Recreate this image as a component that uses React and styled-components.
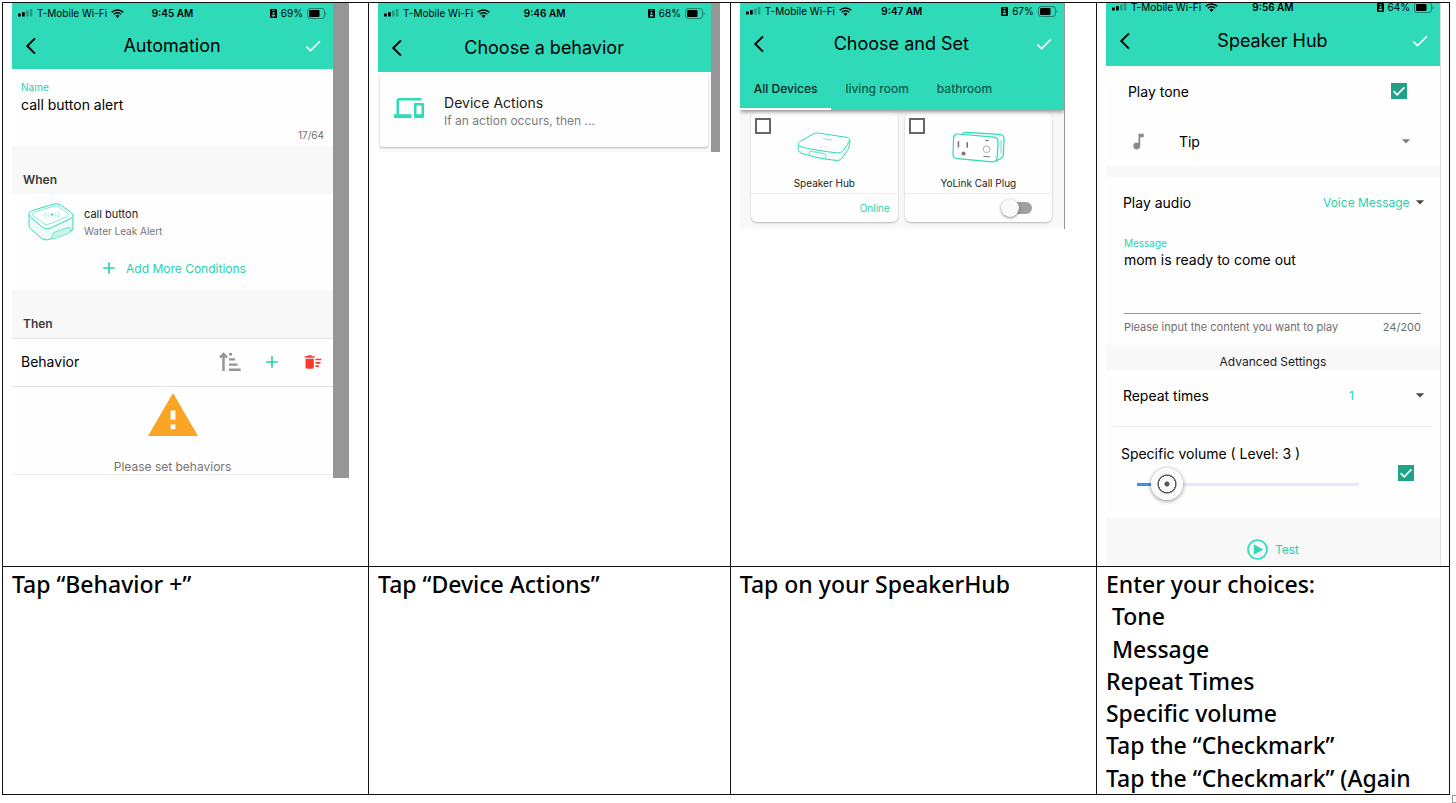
import React, { useState } from 'react'
import styled, { createGlobalStyle } from 'styled-components'
import {
  MdAdd,
  MdArrowDropDown,
  MdCheck,
  MdDeleteSweep,
  MdDevices,
  MdMusicNote,
} from 'react-icons/md'

const teal = '#2edab8'
const tealText = '#2bd0ae'

export default function App() {
  return (
    <Page>
      <GlobalStyle />
      <Steps>
        <colgroup>
          <col width="25.3%" />
          <col width="25%" />
          <col width="25.3%" />
          <col width="24.4%" />
        </colgroup>
        <tbody>
          <tr>
            <Cell>
              <AutomationShot />
            </Cell>
            <Cell>
              <BehaviorShot />
            </Cell>
            <Cell>
              <DevicesShot />
            </Cell>
            <Cell>
              <SpeakerShot />
            </Cell>
          </tr>
          <tr>
            <Cell>
              <Caption>Tap “Behavior +”</Caption>
            </Cell>
            <Cell>
              <Caption>Tap “Device Actions”</Caption>
            </Cell>
            <Cell>
              <Caption>Tap on your SpeakerHub</Caption>
            </Cell>
            <Cell>
              <Caption>{'Enter your choices:\n Tone'}</Caption>
              <Caption>
                {' Message\nRepeat Times\nSpecific volume\nTap the “Checkmark”'}
              </Caption>
              <Caption>Tap the “Checkmark” (Again</Caption>
            </Cell>
          </tr>
        </tbody>
      </Steps>
      <ResizeHandle />
    </Page>
  )
}

const AutomationShot = () => (
  <Shot $max={337}>
    <Screen>
      <Header title="Automation" time="9:45 AM" battery="69%" status={20} nav={46} done />
      <NameField>
        <FieldLabel htmlFor="name">Name</FieldLabel>
        <TextInput id="name" defaultValue="call button alert" />
        <Counter>17/64</Counter>
      </NameField>
      <Section>When</Section>
      <Condition>
        <ButtonArt />
        <div>
          <ConditionName>call button</ConditionName>
          <ConditionNote>Water Leak Alert</ConditionNote>
        </div>
      </Condition>
      <AddMore type="button">
        <MdAdd size={20} />
        Add More Conditions
      </AddMore>
      <Section>Then</Section>
      <BehaviorBar>
        <span>Behavior</span>
        <BehaviorTools>
          <IconButton type="button" aria-label="Sort">
            <SortIcon />
          </IconButton>
          <IconButton type="button" aria-label="Add behavior">
            <MdAdd size={20} color={tealText} />
          </IconButton>
          <IconButton type="button" aria-label="Delete all">
            <MdDeleteSweep size={20} color="#f73c2f" />
          </IconButton>
        </BehaviorTools>
      </BehaviorBar>
      <Empty>
        <WarningIcon />
        Please set behaviors
      </Empty>
    </Screen>
    <Strip $width={16} />
  </Shot>
)

const BehaviorShot = () => (
  <Shot $max={342}>
    <Screen>
      <Header title="Choose a behavior" time="9:46 AM" battery="68%" status={20} nav={49} />
      <CardArea>
        <ActionCard type="button">
          <MdDevices size={30} color={teal} />
          <span>
            <ActionName>Device Actions</ActionName>
            <ActionNote>If an action occurs, then ...</ActionNote>
          </span>
        </ActionCard>
      </CardArea>
    </Screen>
    <Strip $width={9} />
  </Shot>
)

const DevicesShot = () => (
  <Shot $max={325}>
    <Screen>
      <Header title="Choose and Set" time="9:47 AM" battery="67%" status={16} nav={50} done>
        <Tabs role="tablist">
          <Tab type="button" role="tab" aria-selected="true" $active>
            All Devices
          </Tab>
          <Tab type="button" role="tab" aria-selected="false">
            living room
          </Tab>
          <Tab type="button" role="tab" aria-selected="false">
            bathroom
          </Tab>
        </Tabs>
      </Header>
      <DeviceGrid>
        <Device>
          <DeviceTop>
            <EmptyBox type="checkbox" aria-label="Select Speaker Hub" />
            <HubArt />
          </DeviceTop>
          <DeviceName>Speaker Hub</DeviceName>
          <DeviceFoot>
            <Online>Online</Online>
          </DeviceFoot>
        </Device>
        <Device>
          <DeviceTop>
            <EmptyBox type="checkbox" aria-label="Select YoLink Call Plug" />
            <PlugArt />
          </DeviceTop>
          <DeviceName>YoLink Call Plug</DeviceName>
          <DeviceFoot $inset>
            <Switch type="checkbox" role="switch" aria-label="YoLink Call Plug power" />
          </DeviceFoot>
        </Device>
      </DeviceGrid>
    </Screen>
    <Strip $width={1} />
  </Shot>
)

const SpeakerShot = () => {
  const [level, setLevel] = useState(3)

  return (
    <Shot $max={336}>
      <Screen>
        <Header title="Speaker Hub" time="9:56 AM" battery="64%" status={8} nav={50} cropped done />
        <ToneRow>
          <label htmlFor="tone">Play tone</label>
          <CheckBox id="tone" />
        </ToneRow>
        <TipRow>
          <MdMusicNote size={21} color="#8a8a8a" />
          <Select aria-label="Tone">
            <option>Tip</option>
          </Select>
          <MdArrowDropDown size={20} color="#808080" />
        </TipRow>
        <Band />
        <SettingRow>
          <label htmlFor="audio">Play audio</label>
          <Picker>
            <Select id="audio" $accent>
              <option>Voice Message</option>
            </Select>
            <MdArrowDropDown size={20} />
          </Picker>
        </SettingRow>
        <MessageField>
          <FieldLabel htmlFor="message">Message</FieldLabel>
          <MessageInput id="message" defaultValue="mom is ready to come out" />
          <Hint>
            <span>Please input the content you want to play</span>
            <span>24/200</span>
          </Hint>
        </MessageField>
        <Advanced>Advanced Settings</Advanced>
        <SettingRow>
          <label htmlFor="repeat">Repeat times</label>
          <Picker $spread>
            <Select id="repeat" $accent>
              <option>1</option>
            </Select>
            <MdArrowDropDown size={20} />
          </Picker>
        </SettingRow>
        <Divider />
        <Volume>
          <VolumeMain>
            <label htmlFor="volume">Specific volume ( Level: {level} )</label>
            <Range
              id="volume"
              type="range"
              min="1"
              max="16"
              value={level}
              onChange={(e) => setLevel(Number(e.target.value))}
              style={{ '--fill': (level - 1) / 15 }}
            />
          </VolumeMain>
          <CheckBox id="use-volume" label="Use specific volume" />
        </Volume>
        <TestBar>
          <TestButton type="button">
            <PlayIcon />
            Test
          </TestButton>
        </TestBar>
      </Screen>
      <Strip $width={1} $light />
    </Shot>
  )
}

const Header = ({ title, time, battery, status, nav, cropped, done, children }) => (
  <Top $raised={Boolean(children)}>
    <Status $height={status} $cropped={cropped}>
      <StatusSide>
        <SignalIcon />
        T-Mobile Wi-Fi
        <WifiIcon />
      </StatusSide>
      <Time>{time}</Time>
      <StatusSide $end>
        <BadgeIcon />
        {battery}
        <BatteryIcon />
      </StatusSide>
    </Status>
    <Nav $height={nav}>
      <IconButton type="button" aria-label="Back">
        <BackIcon />
      </IconButton>
      <Title>{title}</Title>
      {done && (
        <IconButton type="button" aria-label="Done">
          <MdCheck size={20} color="#fff" />
        </IconButton>
      )}
    </Nav>
    {children}
  </Top>
)

const CheckBox = ({ id, label }) => (
  <Tick>
    <input id={id} type="checkbox" defaultChecked aria-label={label} />
    <svg width="16" height="16" viewBox="0 0 16 16">
      <path d="M2.6 8.2l3.6 3.6 7.2-7.4" fill="none" stroke="#fff" strokeWidth="1.7" />
    </svg>
  </Tick>
)

/* icons */

const SignalIcon = () => (
  <svg width="15" height="8" viewBox="0 0 15 8">
    <rect x="0" y="4.5" width="2.8" height="3" rx="0.6" />
    <rect x="4" y="3" width="2.8" height="4.5" rx="0.6" />
    <rect x="8" y="1.5" width="2.6" height="6" rx="0.6" opacity="0.28" />
    <rect x="11.8" y="0" width="2.6" height="7.5" rx="0.6" opacity="0.28" />
  </svg>
)

const WifiIcon = () => (
  <svg width="13" height="9" viewBox="0 0 13 9">
    <g fill="none" stroke="#000" strokeWidth="1.5">
      <path d="M0.7 3.3a8.2 8.2 0 0 1 11.6 0" />
      <path d="M2.8 5.3a5.3 5.3 0 0 1 7.4 0" />
    </g>
    <path d="M4.5 6.8a2.9 2.9 0 0 1 4 0L6.5 8.9z" />
  </svg>
)

const BadgeIcon = () => (
  <svg width="7" height="9" viewBox="0 0 7 9">
    <rect width="7" height="9" rx="1" />
    <rect x="2.4" y="0.9" width="2.2" height="0.9" fill={teal} />
    <circle cx="3.5" cy="4" r="1.1" fill={teal} />
    <path d="M1.5 7.4c0-2.6 4-2.6 4 0z" fill={teal} />
  </svg>
)

const BatteryIcon = () => (
  <svg width="20" height="11" viewBox="0 0 20 11">
    <rect x="0.5" y="0.5" width="17" height="10" rx="2.6" fill="none" stroke="#000" strokeOpacity="0.4" />
    <rect x="2" y="2" width="10.5" height="7" rx="1.2" />
    <path d="M18.6 3.7c1.3.4 1.3 3.2 0 3.6z" opacity="0.4" />
  </svg>
)

const BackIcon = () => (
  <svg width="12" height="18" viewBox="0 0 12 18">
    <path d="M10 1.4L2.3 9l7.7 7.6" fill="none" stroke="#000" strokeWidth="2" />
  </svg>
)

const SortIcon = () => (
  <svg width="22" height="20" viewBox="0 0 22 20">
    <g fill="none" stroke="#949494" strokeWidth="2.4">
      <path d="M4.5 19V3" />
      <path d="M1 5.6L4.5 2 8 5.6" />
      <path d="M10 2.2h3M10 7.4h6M10 12.6h8.6M10 17.8h11.6" />
    </g>
  </svg>
)

const WarningIcon = () => (
  <svg width="50" height="43" viewBox="0 0 50 43">
    <path d="M25 0l25 43H0z" fill="#f9a425" />
    <path d="M22.6 17.4h4.8v9.4h-4.8zM22.6 31.4h4.8v4.8h-4.8z" fill="#fff" />
  </svg>
)

const PlayIcon = () => (
  <svg width="21" height="21" viewBox="0 0 21 21">
    <circle cx="10.5" cy="10.5" r="9.5" fill="none" stroke={teal} strokeWidth="1.7" />
    <path d="M6.8 5.2l9.4 5.3-9.4 5.3z" fill={teal} />
  </svg>
)

/* device drawings */

const ButtonArt = () => (
  <svg width="46" height="38" viewBox="0 0 46 38" fill="none" stroke={teal}>
    <path
      d="M1 11.5v10.2c0 2.2 1 3.4 2.6 4.8l9.6 8.4c2.4 2.2 5.4 2.4 8.4 1.4l20.2-7.4c2.3-.9 3.2-2.2 3.2-4.4V14"
      fill="#effcf8"
    />
    <path
      d="M4.6 7.4L25 1.3c3-.8 5.7-.6 8.2 1.2l9.4 6.6c3.4 2.5 3 5.4-.8 6.8L22.6 25c-3.4 1.2-6.4.8-8.8-1.2L2.8 14.2c-3-2.6-2.2-5.6 1.8-6.8z"
      fill="#fff"
    />
    <path
      d="M6.6 9L25.2 3.4c2.4-.6 4.4-.4 6.4 1l7 5.2c2.4 1.8 2 3.6-.8 4.6l-16 6.6c-2.8 1.2-5 .8-7-1L5.6 12.8C3.6 11 4 9.8 6.6 9z"
      strokeWidth="0.6"
    />
    <path
      d="M24 32.4c-.6 2.8.2 4 2.4 3.2l14-5c2-.8 2.6-2 2.4-4.6-.2-1.8-1-2.2-2.8-1.6l-12.4 4.4c-2.2.8-3.2 1.6-3.6 3.6z"
      fill="#c7f3e8"
      strokeWidth="0.6"
    />
    <g strokeWidth="0.6" opacity="0.8">
      <ellipse cx="24" cy="11.6" rx="1.3" ry="1" fill={teal} />
      <path d="M21 9.6c-1.4 1.2-1.4 3 0 4.2M27 9.4c1.4 1.2 1.4 3 0 4.2M18.6 8.6c-2.6 2-2.4 4.6 0 6.4M29.4 8.4c2.4 1.8 2.4 4.4 0 6.4" />
    </g>
  </svg>
)

const HubArt = () => (
  <svg width="54" height="30" viewBox="0 0 54 30" fill="none" stroke={teal}>
    <path
      d="M1.2 12.6v4.6c0 2 1.4 3.4 3.8 4.2 9.6 3 21.6 6 34.2 7 2.6.2 4.4-.4 5.8-2.2l5.4-7.6c2-3 2.6-6 2.4-11"
      fill="#f1fbf8"
    />
    <path
      d="M3.4 9.4L15 2.6C17.4 1.2 19.6.8 22.6 1.2l26.2 4c3.6.6 4.8 2 3.2 4.8l-5.6 8.2c-1.6 2-3.6 3-6.8 2.6C27 19.4 14.6 17.6 4 14.8c-3.4-1-3.6-3.6-.6-5.4z"
      fill="#fff"
    />
    <path d="M12.2 23.8v-3.4c0-1 .5-1.3 1.6-1.1l13.4 2.3c1.1.2 1.6.8 1.6 1.9v3.7" strokeWidth="0.7" />
    <path d="M26 6.6l9 1.4M24 14.6h1M28 15h1" strokeWidth="0.9" opacity="0.7" />
  </svg>
)

const PlugArt = () => (
  <svg width="53" height="32" viewBox="0 0 53 32" fill="none" stroke={teal} strokeWidth="1.2">
    <path
      d="M10 2.8c1-1 2.2-1.6 3.8-1.5l33.8 2c2.8.2 4.4 1.8 4.4 4.4l-.6 15.6c-.2 2.6-1.4 4.2-3.8 5l-4 2"
      fill="#f1fbf8"
    />
    <path
      d="M6 3l35.6 3.2c3 .3 4.6 2 4.4 5l-.8 15c-.2 3-2 4.8-5 4.6L5.4 27.6c-3-.3-4.6-2-4.4-5L1.6 7.4C1.8 4.4 3.2 2.8 6 3z"
      fill="#fff"
    />
    <path d="M49 9.6v13" strokeWidth="0.7" />
    <g stroke="#777" strokeWidth="1">
      <path d="M6.4 10.2v6.2M15.2 11.2v5.6" strokeWidth="1.6" />
      <path d="M10 23.8v-1.6c0-1.6 3-1.6 3 0v1.6z" fill="#777" />
      <path d="M33 9.4h4M31.4 25.4l6.6.4" />
      <circle cx="34.6" cy="18.2" r="3.4" strokeWidth="0.6" />
    </g>
  </svg>
)

/* page */

const GlobalStyle = createGlobalStyle`
  *, *::before, *::after {
    box-sizing: border-box;
  }
  body {
    margin: 0;
    background: #fff;
    color: #000;
    font-family: Inter, Roboto, sans-serif;
  }
  button, input, select, textarea {
    margin: 0;
    padding: 0;
    border: 0;
    background: none;
    color: inherit;
    font: inherit;
  }
  svg {
    display: block;
    flex: none;
  }
`

const Page = styled.main`
  position: relative;
  padding: 2px 6px 8px 2px;
`

const Steps = styled.table`
  width: 100%;
  table-layout: fixed;
  border-spacing: 0;
  border: solid #111;
  border-width: 1px 0 0 1px;
`

const Cell = styled.td`
  padding: 0 8px 0 9px;
  border: solid #111;
  border-width: 0 1px 1px 0;
  vertical-align: top;
`

const Caption = styled.p`
  margin: 1px 0 0;
  font-family: 'Noto Sans', sans-serif;
  font-size: 23px;
  font-weight: 500;
  line-height: 32px;
  white-space: pre;
`

const ResizeHandle = styled.span`
  position: absolute;
  right: -3px;
  bottom: 0;
  width: 7px;
  height: 8px;
  border: 1px solid #999;
  background: #fff;
`

const Shot = styled.div`
  display: flex;
  width: 100%;
  max-width: ${(p) => p.$max}px;
`

const Screen = styled.section`
  flex: 1;
  min-width: 0;
  overflow: hidden;
  background: #fefefe;
`

const Strip = styled.div`
  flex: none;
  width: ${(p) => p.$width}px;
  background: ${(p) => (p.$light ? '#dedede' : '#969696')};
`

/* screen header */

const Top = styled.header`
  position: relative;
  background: ${teal};
  box-shadow: ${(p) => (p.$raised ? '0 2px 4px #0006' : 'none')};
`

const Status = styled.div`
  display: grid;
  grid-template-columns: 1fr auto 1fr;
  align-items: center;
  align-content: center;
  box-sizing: content-box;
  height: ${(p) => p.$height}px;
  padding: 0 6px ${(p) => (p.$cropped ? 5 : 0)}px;
  font-size: 10px;
  line-height: 14px;
  white-space: nowrap;
`

const StatusSide = styled.div`
  display: flex;
  align-items: center;
  justify-content: ${(p) => (p.$end ? 'flex-end' : 'flex-start')};
  gap: 4px;
`

const Time = styled.span`
  font-weight: 600;
`

const Nav = styled.div`
  display: grid;
  grid-template-columns: 32px 1fr 32px;
  align-items: center;
  height: ${(p) => p.$height}px;
  padding: 0 4px 0 3px;
`

const Title = styled.h2`
  margin: 0;
  font-size: 18px;
  font-weight: 400;
  line-height: 24px;
  text-align: center;
`

const IconButton = styled.button`
  display: flex;
  align-items: center;
  justify-content: center;
`

/* automation */

const FieldLabel = styled.label`
  display: block;
  color: ${tealText};
  font-size: 10px;
  line-height: 16px;
`

const NameField = styled.div`
  height: 77px;
  padding: 10px 9px 0;
`

const TextInput = styled.input`
  display: block;
  width: 100%;
  height: 18px;
  font-size: 14px;
`

const Counter = styled.div`
  margin-top: 14px;
  color: #6e6e6e;
  font-size: 10px;
  line-height: 16px;
  text-align: right;
`

const Section = styled.h3`
  margin: 0;
  height: 48px;
  padding: 24px 11px 0;
  background: #f8f8f8;
  color: #3c3c3c;
  font-size: 12px;
  font-weight: 600;
  line-height: 20px;
`

const Condition = styled.div`
  display: flex;
  align-items: center;
  gap: 10px;
  height: 56px;
  padding: 0 16px;
`

const ConditionName = styled.div`
  color: #1c1c1c;
  font-size: 11px;
  line-height: 18px;
`

const ConditionNote = styled.div`
  color: #767676;
  font-size: 10px;
  line-height: 16px;
`

const AddMore = styled.button`
  display: flex;
  align-items: center;
  justify-content: center;
  gap: 7px;
  width: 100%;
  height: 40px;
  padding-bottom: 4px;
  color: ${tealText};
  font-size: 12px;
`

const BehaviorBar = styled.div`
  display: flex;
  align-items: center;
  justify-content: space-between;
  height: 49px;
  padding: 0 10px 2px 9px;
  border: 1px solid #e4e4e4;
  border-width: 1px 0;
  font-size: 14px;
`

const BehaviorTools = styled.div`
  display: flex;
  align-items: center;
  gap: 21px;
`

const Empty = styled.div`
  display: flex;
  flex-direction: column;
  align-items: center;
  gap: 23px;
  height: 88px;
  margin-bottom: 3px;
  padding-top: 6px;
  border-bottom: 1px solid #eee;
  color: #757575;
  font-size: 12px;
  line-height: 16px;
`

/* behavior list */

const CardArea = styled.div`
  padding: 3px 3px 5px 2px;
  background: #f9f9f9;
`

const ActionCard = styled.button`
  display: flex;
  align-items: flex-start;
  gap: 20px;
  width: 100%;
  height: 72px;
  padding: 18px 14px;
  border-radius: 3px;
  background: #fefefe;
  box-shadow: 0 1px 2px #0004;
  text-align: left;
`

const ActionName = styled.span`
  display: block;
  color: #1c1c1c;
  font-size: 14px;
  line-height: 20px;
`

const ActionNote = styled.span`
  display: block;
  color: #7c7c7c;
  font-size: 12px;
  line-height: 16px;
`

/* device picker */

const Tabs = styled.div`
  display: flex;
  height: 41px;
`

const Tab = styled.button`
  padding: 0 14px;
  border-bottom: 2px solid ${(p) => (p.$active ? '#fff' : 'transparent')};
  color: ${(p) => (p.$active ? '#06231d' : '#0b5c4c')};
  font-size: 12px;
  font-weight: 500;
  white-space: nowrap;
`

const DeviceGrid = styled.div`
  display: grid;
  grid-template-columns: 1fr 1fr;
  gap: 7px;
  padding: 2px 12px 7px 11px;
  background: #f8f8f8;
`

const Device = styled.article`
  border-radius: 6px;
  background: #fefefe;
  box-shadow: 0 1px 2px #0004;
`

const DeviceTop = styled.div`
  display: grid;
  height: 62px;
  padding: 6px 4px;

  > * {
    grid-area: 1 / 1;
  }
  > svg {
    place-self: center;
    margin-top: 8px;
  }
`

const EmptyBox = styled.input`
  appearance: none;
  width: 16px;
  height: 16px;
  border: 2px solid #666;
`

const DeviceName = styled.h4`
  margin: 0;
  height: 20px;
  border-bottom: 1px solid #eee;
  color: #1c1c1c;
  font-size: 10px;
  font-weight: 400;
  line-height: 18px;
  text-align: center;
`

const DeviceFoot = styled.div`
  display: flex;
  align-items: center;
  justify-content: flex-end;
  height: 28px;
  padding-right: ${(p) => (p.$inset ? 20 : 8)}px;
`

const Online = styled.span`
  color: ${tealText};
  font-size: 10px;
`

const Switch = styled.input`
  appearance: none;
  display: flex;
  align-items: center;
  width: 28px;
  height: 12px;
  border-radius: 6px;
  background: #a0a0a0;

  &::before {
    content: '';
    width: 18px;
    height: 18px;
    margin-left: -3px;
    border-radius: 50%;
    background: #fafafa;
    box-shadow: 0 1px 3px #0007;
  }
`

/* speaker settings */

const Row = styled.div`
  display: flex;
  align-items: center;
  height: 50px;
  font-size: 14px;
`

const ToneRow = styled(Row)`
  justify-content: space-between;
  padding: 0 33px 0 22px;
`

const TipRow = styled(Row)`
  gap: 30px;
  padding: 0 24px 0 22px;
`

const SettingRow = styled(Row)`
  justify-content: space-between;
  padding: 0 10px 0 17px;
`

const Select = styled.select`
  appearance: none;
  flex: ${(p) => (p.$accent ? 'none' : 1)};
  color: ${(p) => (p.$accent ? tealText : 'inherit')};
  font-size: ${(p) => (p.$accent ? 12 : 14)}px;
`

const Picker = styled.div`
  display: flex;
  align-items: center;
  gap: ${(p) => (p.$spread ? 56 : 0)}px;
  color: #4a4a4a;
`

const Tick = styled.span`
  display: grid;
  flex: none;
  width: 16px;
  height: 16px;
  background: #1fa287;

  > * {
    grid-area: 1 / 1;
  }
  input {
    appearance: none;
  }
  svg {
    pointer-events: none;
  }
`

const Band = styled.div`
  height: 11px;
  background: #f8f8f8;
`

const MessageField = styled.div`
  height: 118px;
  padding: 8px 19px 0 18px;
`

const MessageInput = styled.textarea`
  display: block;
  width: 100%;
  height: 63px;
  border-bottom: 1px solid #9a9a9a;
  font-size: 14px;
  line-height: 18px;
  resize: none;
`

const Hint = styled.div`
  display: flex;
  justify-content: space-between;
  padding-top: 5px;
  color: #6e6e6e;
  font-size: 11px;
  line-height: 16px;
  white-space: nowrap;
`

const Advanced = styled.h3`
  margin: 0;
  padding-top: 9px;
  background: #f8f8f8;
  color: #1c1c1c;
  font-size: 12px;
  font-weight: 400;
  line-height: 16px;
  text-align: center;
`

const Divider = styled.hr`
  margin: 6px 8px 0;
  border: 0;
  border-top: 1px solid #e8e8e8;
`

const Volume = styled.div`
  display: flex;
  align-items: center;
  justify-content: space-between;
  height: 91px;
  padding: 0 26px 0 15px;
`

const VolumeMain = styled.div`
  display: flex;
  flex: 1;
  flex-direction: column;
  gap: 5px;
  max-width: 254px;
  font-size: 14px;
  line-height: 18px;
`

const Range = styled.input`
  appearance: none;
  width: 100%;
  height: 32px;
  background:
    linear-gradient(#3d8ff0 0 0) 16px 50% / calc((100% - 32px) * var(--fill)) 3px no-repeat,
    linear-gradient(#e8e8fb 0 0) 50% 50% / calc(100% - 32px) 3px no-repeat;

  &::-webkit-slider-thumb {
    appearance: none;
    width: 32px;
    height: 32px;
    border-radius: 50%;
    background: radial-gradient(circle, #555 0 2px, #fafafa 3px 8px, #555 8px 9px, #fafafa 10px);
    box-shadow: 0 1px 4px #0007;
  }
`

const TestBar = styled.div`
  display: flex;
  justify-content: center;
  height: 48px;
  padding-bottom: 1px;
  padding-top: 15px;
  background: #f8f8f8;
`

const TestButton = styled.button`
  display: flex;
  align-items: center;
  gap: 7px;
  color: ${tealText};
  font-size: 12px;
`
